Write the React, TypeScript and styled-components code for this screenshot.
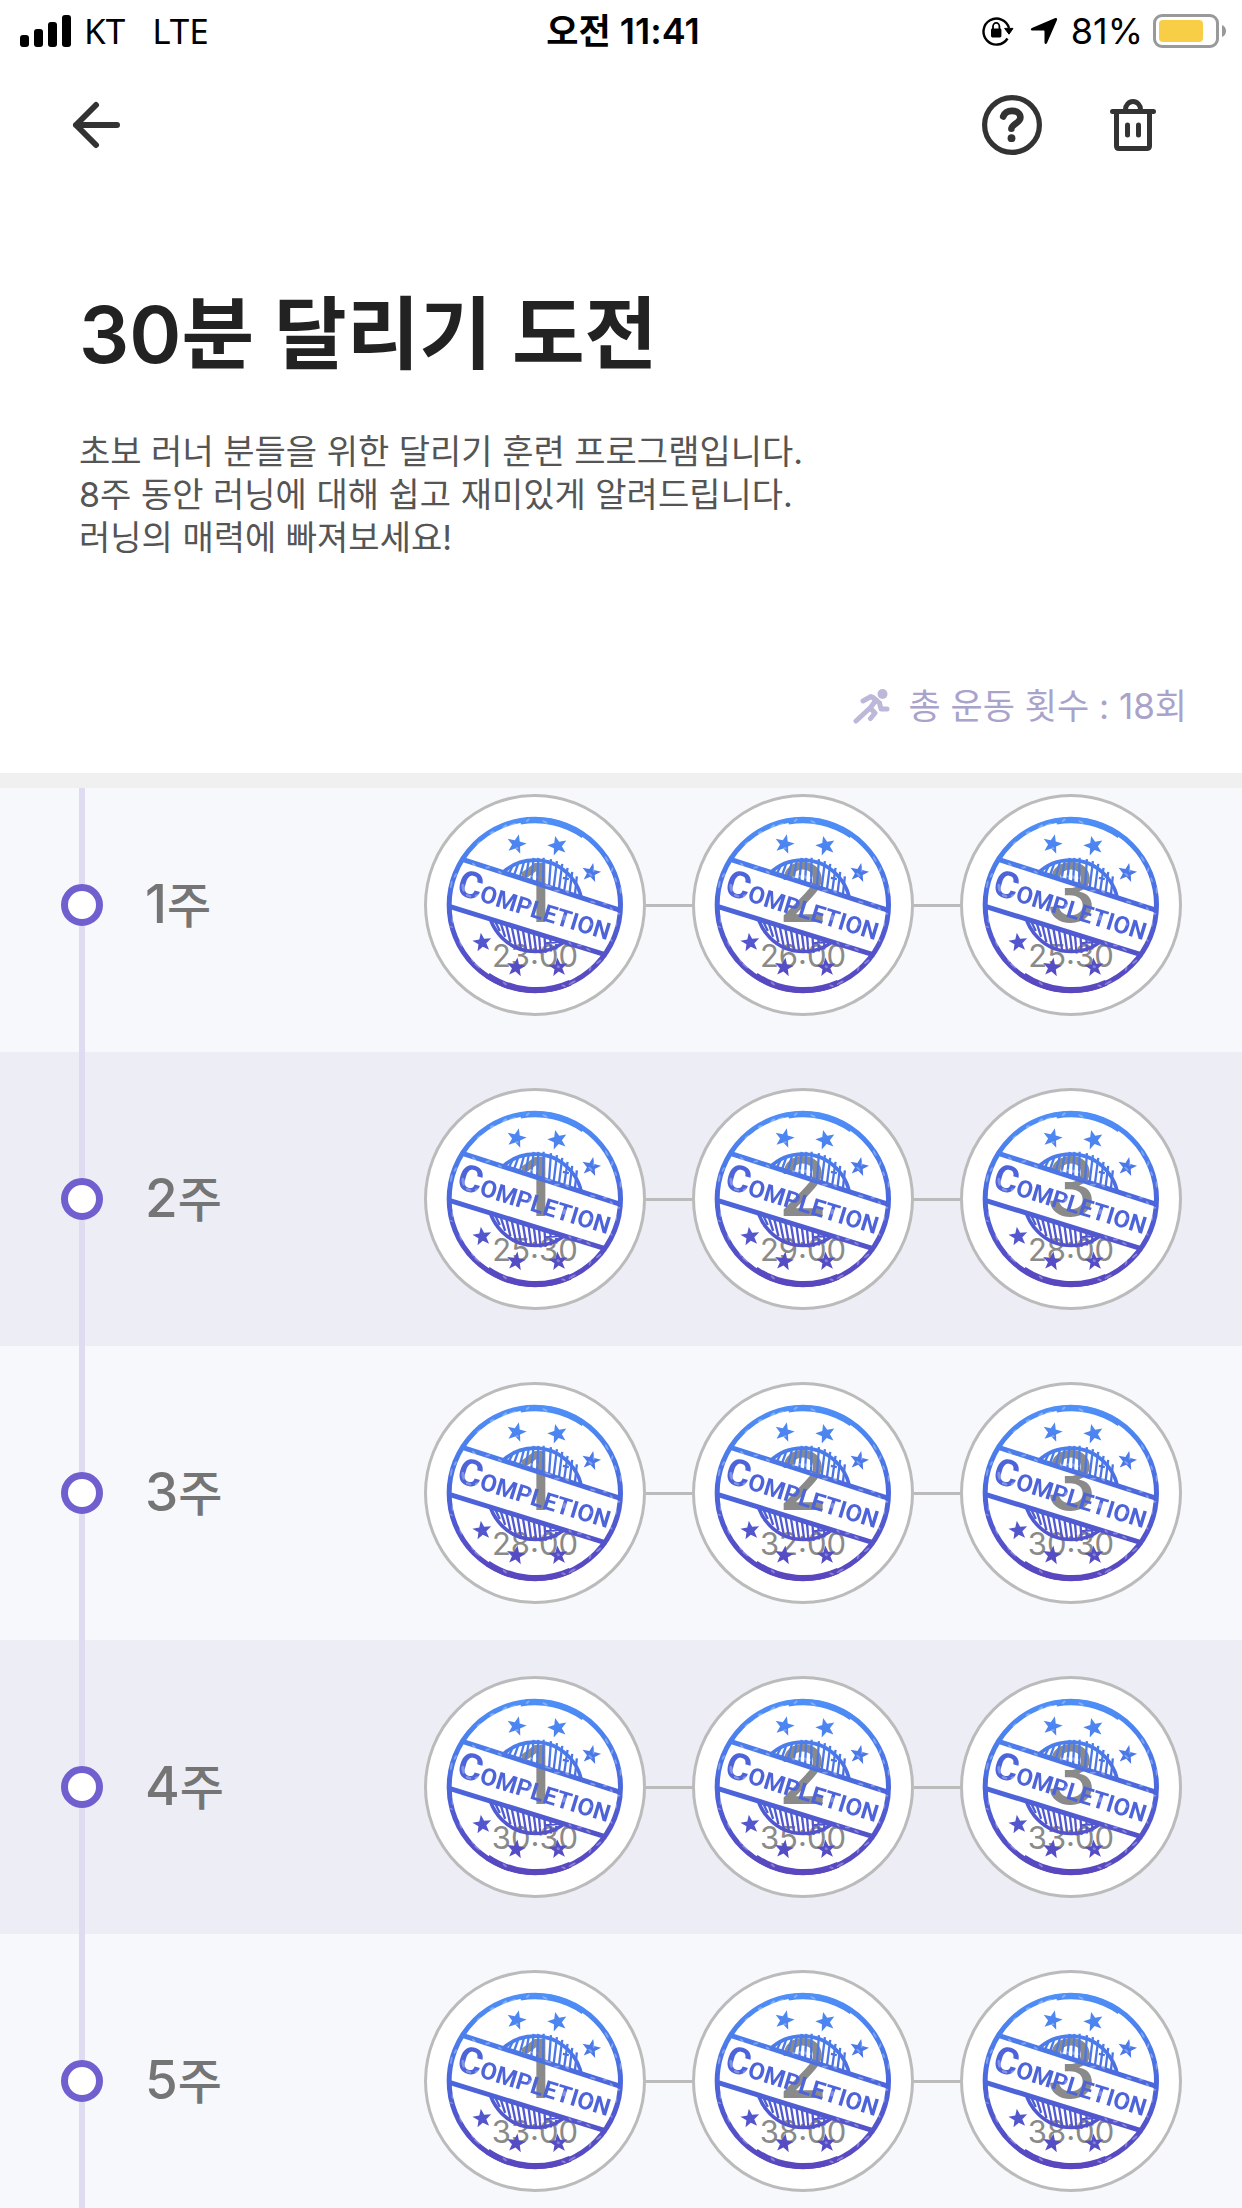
import React from "react";
import styled, { createGlobalStyle } from "styled-components";

const GlobalStyle = createGlobalStyle`
  * { box-sizing: border-box; }
  body {
    margin: 0;
    background: #ffffff;
    font-family: Inter, "Noto Sans CJK KR", sans-serif;
  }
`;

const Screen = styled.div`
  display: flex;
  flex-direction: column;
  height: 100vh;
  overflow: hidden;
  background: #ffffff;
`;

const StatusBar = styled.div`
  display: grid;
  grid-template-columns: 1fr auto 1fr;
  align-items: center;
  height: 62px;
  padding: 0 16px 0 20px;
  color: #000000;
  font-size: 36px;
  line-height: 40px;
`;

const Carrier = styled.div`
  display: flex;
  align-items: center;
  gap: 12px;
  font-family: "Noto Sans", sans-serif;
  font-size: 35px;
`;

const Network = styled.span`
  margin-left: 15px;
`;

const StatusIcons = styled.div`
  display: flex;
  align-items: center;
  justify-content: flex-end;
  gap: 10px;
`;

const Indicators = styled.div`
  display: flex;
  align-items: center;
  gap: 16px;
  margin-right: 3px;
`;

const Clock = styled.time`
  font-weight: 600;
`;

const Korean = styled.span<{ $size: number }>`
  font-size: ${(p) => p.$size}px;
`;

const Toolbar = styled.header`
  display: flex;
  align-items: center;
  justify-content: space-between;
  height: 126px;
  padding: 0 72px 0 59px;
`;

const ToolbarActions = styled.div`
  display: flex;
  gap: 47px;
`;

const IconButton = styled.button`
  display: grid;
  place-items: center;
  width: 74px;
  height: 74px;
  padding: 0;
  border: 0;
  background: none;
  color: #333333;
`;

const Intro = styled.section`
  display: flex;
  flex-direction: column;
  padding: 92px 55px 43px 79px;
`;

const Title = styled.h1`
  margin: 0;
  color: #222222;
  font-size: 79px;
  font-weight: 600;
  line-height: 108px;
`;

const Description = styled.p`
  margin: 42px 0 0;
  color: #555555;
  font-size: 34px;
  line-height: 43px;
`;

const Total = styled.div`
  display: flex;
  align-items: center;
  justify-content: flex-end;
  gap: 18px;
  margin-top: 123px;
  color: #a9a3cb;
  font-size: 35px;
  line-height: 48px;
`;

const WeekList = styled.ol`
  flex: 1;
  min-height: 0;
  margin: 0;
  padding: 0;
  border-top: 15px solid #f0f0f0;
  list-style: none;
  overflow-y: auto;
  scrollbar-width: none;
`;

const WeekRow = styled.li<{ $first: boolean; $shaded: boolean }>`
  display: grid;
  grid-template-columns: 42px auto 1fr;
  align-items: center;
  column-gap: 42px;
  padding: ${(p) => (p.$first ? "6px" : "36px")} 60px 36px 61px;
  background:
    linear-gradient(#dfdcf1, #dfdcf1) 79px 0 / 6px 100% no-repeat,
    ${(p) => (p.$shaded ? "#ededf6" : "#f7f8fc")};
`;

const Node = styled.span`
  width: 42px;
  height: 42px;
  border: 7px solid #705fcf;
  border-radius: 50%;
  background: #ffffff;
`;

const WeekLabel = styled.h2`
  margin: 0;
  color: #757575;
  font-size: 53px;
  font-weight: 500;
  line-height: 72px;
`;

const Sessions = styled.div`
  display: flex;
  align-items: center;
  justify-content: flex-end;
`;

const Connector = styled.span`
  width: 46px;
  height: 3px;
  background: #bbbbbb;
`;

const SessionButton = styled.button`
  display: grid;
  place-items: center;
  width: 222px;
  height: 222px;
  padding: 0;
  border: 3px solid #bbbbbb;
  border-radius: 50%;
  background: #ffffff;
  font-family: inherit;
  color: #8a8a8a;

  & > * {
    grid-area: 1 / 1;
  }
`;

const SessionText = styled.span`
  display: flex;
  flex-direction: column;
  align-items: center;
  padding-top: 14px;
`;

const SessionNumber = styled.span`
  font-size: 81px;
  font-weight: 500;
  line-height: 88px;
`;

const SessionTime = styled.span`
  font-size: 31px;
  line-height: 38px;
`;

const StampArt = styled.svg`
  width: 178px;
  height: 178px;
`;

const starPoints = (cx: number, cy: number, r: number, turn: number) =>
  Array.from({ length: 10 }, (_, i) => {
    const radius = i % 2 === 0 ? r : r * 0.42;
    const a = ((turn - 90 + i * 36) * Math.PI) / 180;
    return `${(cx + radius * Math.cos(a)).toFixed(1)},${(cy + radius * Math.sin(a)).toFixed(1)}`;
  }).join(" ");

const STARS: [number, number, number, number][] = [
  [318, 191, 31, 14],
  [442, 196, 31, -14],
  [543, 277, 30, 12],
  [215, 487, 30, -8],
  [317, 562, 30, 8],
  [444, 562, 30, -6],
];

/* Worn spots where the ink did not take: x, y, rx, ry, turn */
const WORN: [number, number, number, number, number][] = [
  [404, 124, 9, 3, 30], [352, 119, 7, 3, -40], [306, 133, 12, 4, -20], [283, 139, 9, 5, -40],
  [263, 156, 14, 4, -38], [246, 157, 8, 5, -10], [229, 175, 13, 4, -50], [205, 188, 8, 4, -35],
  [276, 150, 6, 6, 0], [590, 236, 3, 10, -30], [606, 268, 3, 8, 20], [617, 298, 3, 8, -20],
  [632, 330, 3, 10, 0], [625, 400, 6, 3, 0], [618, 432, 3, 8, 10], [602, 478, 8, 3, 50],
  [566, 545, 10, 3, -40], [540, 566, 3, 8, 20], [486, 608, 12, 3, -30], [460, 617, 7, 3, 20],
  [283, 610, 8, 3, 40], [200, 557, 12, 3, 40], [186, 540, 8, 3, 60], [150, 490, 3, 10, -20],
  [126, 420, 3, 9, 0], [122, 440, 6, 2, 30], [122, 312, 3, 12, 10], [134, 285, 3, 8, 30],
  [190, 252, 7, 3, 40], [232, 261, 8, 3, -10], [268, 275, 7, 3, 30], [410, 315, 14, 3, 17],
  [440, 331, 9, 3, 0], [470, 333, 8, 3, 40], [548, 365, 9, 3, 17], [585, 370, 7, 3, 0],
  [604, 385, 6, 3, 50], [508, 496, 8, 3, 0], [535, 508, 8, 3, 30], [480, 490, 7, 3, 50],
  [158, 322, 5, 12, -10], [174, 346, 9, 4, 20], [198, 346, 6, 4, -20], [380, 290, 20, 5, 10],
  [345, 290, 9, 4, 0], [360, 378, 6, 7, 0], [462, 412, 5, 9, 15], [540, 432, 5, 5, 0],
  [541, 283, 8, 3, 40], [551, 268, 3, 7, 0], [320, 203, 5, 3, 0], [444, 560, 5, 4, 20],
  [425, 492, 7, 3, 20], [394, 496, 4, 5, 0],
];

const StampDefs = () => (
  <svg width="0" height="0" display="block" aria-hidden="true">
    <defs>
      <linearGradient id="ink" gradientUnits="userSpaceOnUse" x1="0" y1="108" x2="0" y2="642">
        <stop offset="0" stopColor="#4f90f8" />
        <stop offset="0.25" stopColor="#4b7eec" />
        <stop offset="0.5" stopColor="#4c67dc" />
        <stop offset="0.75" stopColor="#5353ca" />
        <stop offset="1" stopColor="#5945bd" />
      </linearGradient>
      <filter id="inkBleed" filterUnits="userSpaceOnUse" x="100" y="100" width="550" height="550">
        <feGaussianBlur stdDeviation="1.6" />
      </filter>
      <mask id="wear" maskUnits="userSpaceOnUse" x="100" y="100" width="550" height="550">
        <rect x="100" y="100" width="550" height="550" fill="#ffffff" />
        {WORN.map(([x, y, rx, ry, turn], i) => (
          <ellipse
            key={i}
            cx={x}
            cy={y}
            rx={rx}
            ry={ry}
            fill="#000000"
            fillOpacity="0.3"
            transform={`rotate(${turn} ${x} ${y})`}
          />
        ))}
      </mask>
      <clipPath id="aboveBand">
        <path d="M100 100H650V394L160 240L100 221Z" />
      </clipPath>
      <clipPath id="belowBand">
        <path d="M100 373L590 525L650 544V650H100Z" />
      </clipPath>
    </defs>
  </svg>
);

const TOP_HATCH =
  "M292 286L306 258M308 292L324 248M326 298L342 240M344 304L356 236M362 308L370 232M380 312L384 232M398 318L400 232M416 322L422 236M430 324L440 242M446 328L456 250M462 332L472 262M478 338L486 274M494 344L500 288M458 292L476 296";
const BOTTOM_HATCH =
  "M250 415L268 452M268 420L284 470M285 424L300 486M302 430L316 498M319 434L332 508M336 440L348 514M353 444L363 518M369 448L378 518M385 454L391 520M402 460L406 518M420 466L422 514M438 472L438 508M404 490L450 484";

const Stamp = () => (
  <StampArt viewBox="106 106 536 536" aria-hidden="true">
    <g filter="url(#inkBleed)">
      <g mask="url(#wear)" fill="none" stroke="url(#ink)">
        <circle cx="373.5" cy="374" r="258" strokeWidth="15" />
        <path d="M330 123A255 255 0 0 1 520 165" strokeWidth="18" />
        <path d="M232 586A257 257 0 0 0 480 608" strokeWidth="18" />
        <path d="M160 238L634 391" strokeWidth="15" />
        <path d="M116 378L590 525" strokeWidth="15" />
        <g clipPath="url(#aboveBand)">
          <circle cx="373" cy="382" r="143" strokeWidth="11" />
          <path d={TOP_HATCH} strokeWidth="7" />
        </g>
        <g clipPath="url(#belowBand)">
          <circle cx="375" cy="372" r="142" strokeWidth="11" />
          <path d={BOTTOM_HATCH} strokeWidth="7" />
        </g>
        <g fill="url(#ink)" stroke="none">
          {STARS.map(([x, y, r, turn]) => (
            <polygon key={`${x}-${y}`} points={starPoints(x, y, r, turn)} />
          ))}
        </g>
      </g>
      <g mask="url(#wear)">
        <text
          x="134"
          y="340"
          transform="rotate(17 134 340)"
          fill="#4e63d9"
          fontFamily="Roboto, sans-serif"
          fontWeight="700"
          fontSize="112"
        >
          C<tspan fontSize="72">OMPLETION</tspan>
        </text>
      </g>
    </g>
  </StampArt>
);

const SignalIcon = () => (
  <svg width="52" height="32" viewBox="0 0 52 32" aria-hidden="true">
    <rect x="0" y="20" width="9" height="12" rx="3" />
    <rect x="14" y="14" width="9" height="18" rx="3" />
    <rect x="28" y="7" width="9" height="25" rx="3" />
    <rect x="42" y="0" width="9" height="32" rx="3" />
  </svg>
);

const LockIcon = () => (
  <svg width="32" height="30" viewBox="0 0 32 30" aria-hidden="true">
    <path d="M25.5 22.5A13 13 0 1 1 27 12" fill="none" stroke="#000" strokeWidth="2.4" />
    <path d="M22.6 12.4H31L27 18.2Z" stroke="#000" strokeLinejoin="round" />
    <rect x="9" y="12.5" width="10.4" height="9" rx="1.4" />
    <path d="M11 13V10.6A3.2 3.7 0 0 1 17.4 10.6V13" fill="none" stroke="#000" strokeWidth="1.8" />
  </svg>
);

const LocationIcon = () => (
  <svg width="28" height="28" viewBox="0 0 28 28" aria-hidden="true">
    <path d="M25.3 1.1C26.6.5 27.6 1.5 27 2.9L17 26C16.3 27.6 14.5 27.3 14.5 25.6V14.5C14.5 13.8 14.2 13.5 13.5 13.5H2.3C.5 13.5.3 11.8 1.9 11.1Z" />
  </svg>
);

const BatteryIcon = () => (
  <svg width="73" height="34" viewBox="0 0 73 34" aria-hidden="true">
    <rect x="1.5" y="1.5" width="63" height="31" rx="7.5" fill="none" stroke="#999999" strokeWidth="3" />
    <rect x="6" y="6" width="44" height="22" rx="4" fill="#f7ce46" />
    <path d="M69 11C71.5 12 73 14 73 17C73 20 71.5 22 69 23Z" fill="#999999" />
  </svg>
);

const BackIcon = () => (
  <svg width="48" height="48" viewBox="0 0 48 48" fill="none" stroke="currentColor" strokeWidth="6" strokeLinecap="round" strokeLinejoin="round" aria-hidden="true">
    <path d="M45 24H4M24 4L4 24L24 44" />
  </svg>
);

const HelpIcon = () => (
  <svg width="60" height="60" viewBox="0 0 60 60" fill="none" stroke="currentColor" strokeLinecap="round" strokeLinejoin="round" aria-hidden="true">
    <circle cx="30" cy="30" r="27.4" strokeWidth="5.2" />
    <path d="M21.2 21.5C22.6 17.8 26 15.9 30 15.9C35.2 15.9 38.4 18.6 38.4 22.4C38.4 27.6 29.4 29.4 29.4 33.8" strokeWidth="6.6" />
    <circle cx="29.5" cy="43.2" r="3.9" fill="currentColor" stroke="none" />
  </svg>
);

const TrashIcon = () => (
  <svg width="46" height="54" viewBox="0 0 46 54" fill="none" stroke="currentColor" strokeLinecap="round" strokeLinejoin="round" aria-hidden="true">
    <path d="M2.5 13.5H43.5M15.5 13V11.5A7.5 8 0 0 1 30.5 11.5V13" strokeWidth="5" />
    <path d="M6.5 14V48Q6.5 50.5 9 50.5H36.5Q39.5 50.5 39.5 48V14" strokeWidth="5" />
    <path d="M17.5 27V37M28.5 27V37" strokeWidth="5" />
  </svg>
);

const RunnerIcon = () => (
  <svg width="37" height="36" viewBox="0 0 37 36" fill="none" stroke="#bdb8d9" strokeWidth="5" strokeLinecap="round" strokeLinejoin="round" aria-hidden="true">
    <circle cx="29.5" cy="6" r="5" fill="#bdb8d9" stroke="none" />
    <path d="M10 13L18 8.5L23 12L18 19" />
    <path d="M20 9.5L26.5 15L28 21H34" />
    <path d="M3 33L17 20L22 25L17.5 30.5" />
  </svg>
);

const WEEKS = [
  ["23:00", "26:00", "25:30"],
  ["25:30", "29:00", "28:00"],
  ["28:00", "32:00", "30:30"],
  ["30:30", "35:00", "33:00"],
  ["33:00", "38:00", "38:00"],
];

export default function App() {
  return (
    <Screen>
      <GlobalStyle />
      <StampDefs />
      <StatusBar>
        <Carrier>
          <SignalIcon />
          <span>KT</span>
          <Network>LTE</Network>
        </Carrier>
        <Clock>
          <Korean $size={35}>오전</Korean> 11:41
        </Clock>
        <StatusIcons>
          <Indicators>
            <LockIcon />
            <LocationIcon />
          </Indicators>
          <span>81%</span>
          <BatteryIcon />
        </StatusIcons>
      </StatusBar>
      <Toolbar>
        <IconButton type="button" aria-label="뒤로">
          <BackIcon />
        </IconButton>
        <ToolbarActions>
          <IconButton type="button" aria-label="도움말">
            <HelpIcon />
          </IconButton>
          <IconButton type="button" aria-label="삭제">
            <TrashIcon />
          </IconButton>
        </ToolbarActions>
      </Toolbar>
      <Intro>
        <Title>30분 달리기 도전</Title>
        <Description>
          초보 러너 분들을 위한 달리기 훈련 프로그램입니다.
          <br />
          8주 동안 러닝에 대해 쉽고 재미있게 알려드립니다.
          <br />
          러닝의 매력에 빠져보세요!
        </Description>
        <Total>
          <RunnerIcon />
          <span>총 운동 횟수 : 18회</span>
        </Total>
      </Intro>
      <WeekList>
        {WEEKS.map((times, week) => (
          <WeekRow key={week} $first={week === 0} $shaded={week % 2 === 1}>
            <Node />
            <WeekLabel>
              {week + 1}
              <Korean $size={48}>주</Korean>
            </WeekLabel>
            <Sessions>
              {times.map((time, i) => (
                <React.Fragment key={i}>
                  {i > 0 && <Connector />}
                  <SessionButton type="button">
                    <SessionText>
                      <SessionNumber>{i + 1}</SessionNumber>
                      <SessionTime>{time}</SessionTime>
                    </SessionText>
                    <Stamp />
                  </SessionButton>
                </React.Fragment>
              ))}
            </Sessions>
          </WeekRow>
        ))}
      </WeekList>
    </Screen>
  );
}
